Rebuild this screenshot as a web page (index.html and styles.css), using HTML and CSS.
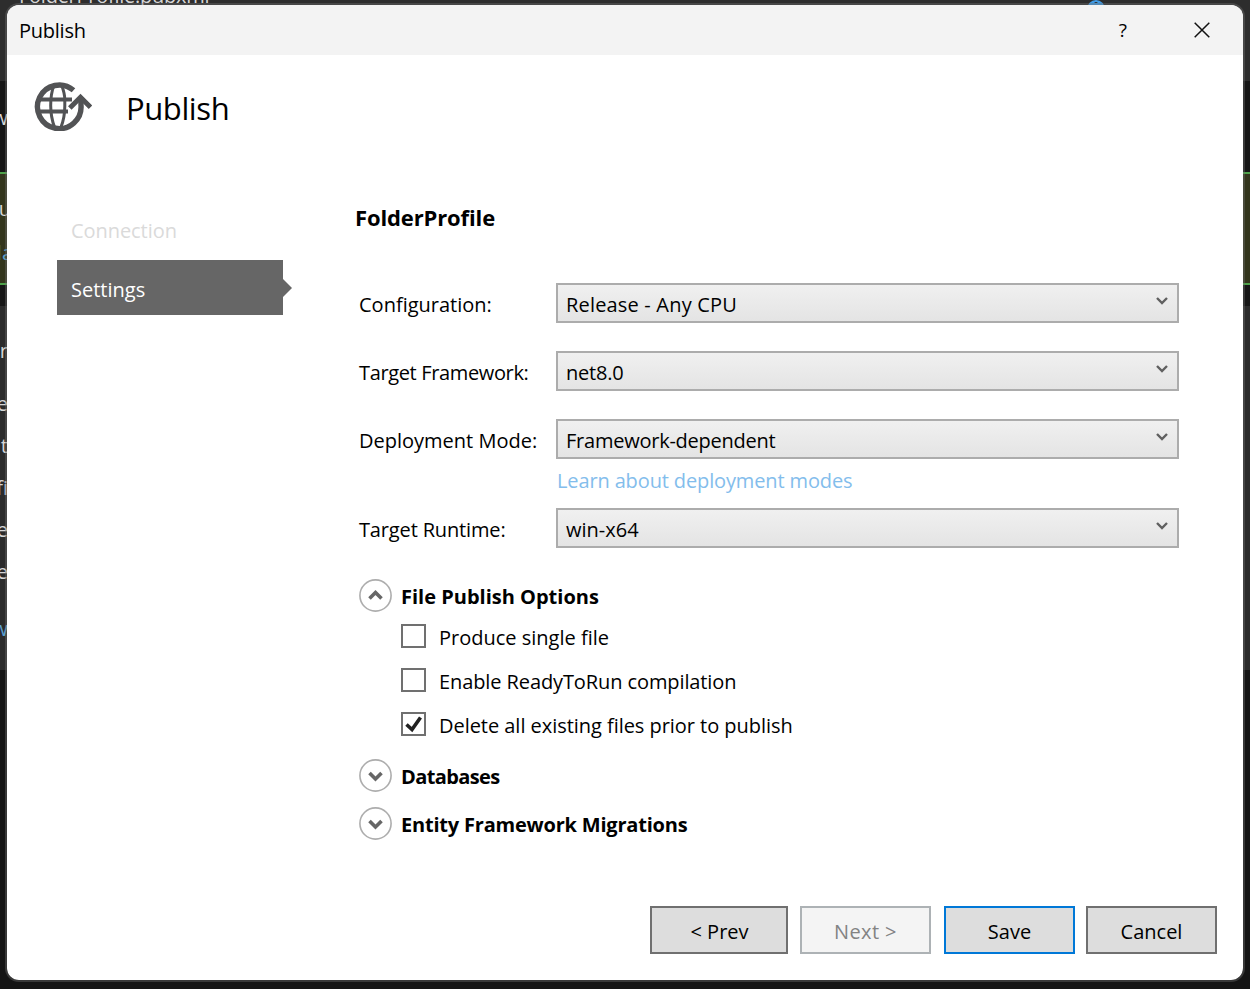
FILE: index.html
```html
<!DOCTYPE html>
<html lang="en">
<head>
    <meta charset="UTF-8" />
    <title>Publish</title>
    <link rel="stylesheet" href="styles.css">
</head>
<body>
    <div class="editor">
        <div class="band band-tabs"></div>
        <div class="band band-dark"></div>
        <div class="band band-notice"></div>
        <div class="band band-gap"></div>
        <div class="band band-panel"></div>
        <span class="peek peek-title">FolderProfile.pubxml</span>
        <svg class="peek-globe" width="18" height="18" viewBox="0 0 18 18" fill="none" stroke="#3f9be6" stroke-width="2"><circle cx="9" cy="9" r="8"/><path d="M2 4h14M6.500 1v16M11.500 1v16"/></svg>
        <span class="peek peek-1">w</span>
        <span class="peek peek-2">u</span>
        <span class="peek peek-3 blue">la</span>
        <span class="peek peek-4">r</span>
        <span class="peek peek-5">e</span>
        <span class="peek peek-6">t</span>
        <span class="peek peek-7">fi</span>
        <span class="peek peek-8">e</span>
        <span class="peek peek-9">e</span>
        <span class="peek peek-10 blue">w</span>
    </div>

    <div class="dialog">
        <div class="titlebar">
            <span class="titlebar-text">Publish</span>
            <span class="titlebar-help">?</span>
            <svg class="titlebar-close" width="16" height="16" viewBox="0 0 16 16" fill="none" stroke="#111" stroke-width="1.5"><path d="M.7.7l14.6 14.6M15.3.7L.7 15.3"/></svg>
        </div>

        <header class="header">
            <svg class="header-icon" width="58" height="50" viewBox="0 0 58 50" fill="none" stroke="#525355">
                <path d="M39.500 9.300A21.800 21.800 0 1 0 47 24V16" stroke-width="5.400"/>
                <path d="M3 18.500h35M3 30.500h31" stroke-width="4"/>
                <path d="M20 4c-4.500 12-4.500 29 .5 42M27.500 4c2 5 3.300 10 3.300 15v6c0 8-1 14-3.800 21" stroke-width="3"/>
                <path d="M35.800 27L46.500 16.300 56.500 26.300" stroke-width="5"/>
            </svg>
            <h1>Publish</h1>
        </header>

        <div class="content">
            <nav class="steps">
                <div class="step disabled">Connection</div>
                <div class="step active">Settings</div>
            </nav>

            <main class="settings">
                <h2>FolderProfile</h2>

                <div class="field">
                    <label>Configuration:</label>
                    <div class="select"><span class="value-config">Release - Any CPU</span><svg class="chevron" width="12" height="10" viewBox="0 0 12 10"><path d="M1 2l5 5 5-5"/></svg></div>
                </div>
                <div class="field">
                    <label class="label-framework">Target Framework:</label>
                    <div class="select"><span class="value-framework">net8.0</span><svg class="chevron" width="12" height="10" viewBox="0 0 12 10"><path d="M1 2l5 5 5-5"/></svg></div>
                </div>
                <div class="field field-mode">
                    <label>Deployment Mode:</label>
                    <div class="select"><span class="value-mode">Framework-dependent</span><svg class="chevron" width="12" height="10" viewBox="0 0 12 10"><path d="M1 2l5 5 5-5"/></svg></div>
                </div>
                <a class="learn-link">Learn about deployment modes</a>
                <div class="field field-runtime">
                    <label class="label-runtime">Target Runtime:</label>
                    <div class="select"><span>win-x64</span><svg class="chevron" width="12" height="10" viewBox="0 0 12 10"><path d="M1 2l5 5 5-5"/></svg></div>
                </div>

                <div class="expander">
                    <svg class="expander-icon" width="33" height="33" viewBox="0 0 33 33"><circle cx="16.500" cy="16.500" r="15.600"/><path d="M10.500 19.500l6-6 6 6"/></svg>
                    <h3>File Publish Options</h3>
                </div>
                <div class="options">
                    <div class="option"><span class="checkbox"></span><span>Produce single file</span></div>
                    <div class="option"><span class="checkbox"></span><span class="option-r2r">Enable ReadyToRun compilation</span></div>
                    <div class="option"><span class="checkbox"><svg width="17" height="17" viewBox="0 0 17 17" fill="none" stroke="#212121" stroke-width="3.600"><path d="M1.500 8.500l5.500 5L15.500 1.500"/></svg></span><span class="option-delete">Delete all existing files prior to publish</span></div>
                </div>
                <div class="expander">
                    <svg class="expander-icon" width="33" height="33" viewBox="0 0 33 33"><circle cx="16.500" cy="16.500" r="15.600"/><path d="M10.500 14l6 6 6-6"/></svg>
                    <h3 class="databases">Databases</h3>
                </div>
                <div class="expander">
                    <svg class="expander-icon" width="33" height="33" viewBox="0 0 33 33"><circle cx="16.500" cy="16.500" r="15.600"/><path d="M10.500 14l6 6 6-6"/></svg>
                    <h3 class="migrations">Entity Framework Migrations</h3>
                </div>
            </main>
        </div>

        <footer class="buttons">
            <button class="btn btn-prev">&lt; Prev</button>
            <button class="btn btn-next" disabled>Next &gt;</button>
            <button class="btn btn-save">Save</button>
            <button class="btn btn-cancel">Cancel</button>
        </footer>
    </div>
</body>
</html>
```
FILE: styles.css
```css
:root {
  --text: #000;
  --border: #acacac;
  --accent: #0078d7;
  --font: "Open Sans", "Noto Sans", sans-serif;
}

* {
  box-sizing: border-box;
  margin: 0;
  padding: 0;
}

body {
  position: relative;
  width: 1250px;
  height: 989px;
  overflow: hidden;
  background: #141414;
  color: var(--text);
  font-family: var(--font);
  font-size: 20px;
  line-height: 28px;
  white-space: nowrap;
}

/* editor window behind the dialog */
.band-tabs { height: 81px; background: #2d2d2d; }
.band-dark { height: 91px; background: #161616; }
.band-notice {
  height: 113px;
  background: #33351c;
  border-top: 2px solid #4ea24a;
  border-bottom: 2px solid #4ea24a;
}
.band-gap { height: 21px; background: #161616; }
.band-panel { height: 364px; background: #2b2b2b; }

.peek {
  position: absolute;
  right: 1242px;
  color: #d6d6d6;
}
.peek.blue { color: #5aa0d0; }
.peek-title { left: 19px; right: auto; top: -18px; letter-spacing: -0.25px; }
.peek-globe { position: absolute; left: 1087px; top: 0; }
.peek-1 { top: 104px; }
.peek-2 { top: 195px; right: 1239px; }
.peek-3 { top: 239px; right: 1237px; }
.peek-4 { top: 337px; }
.peek-5 { top: 390px; }
.peek-6 { top: 432px; }
.peek-7 { top: 474px; }
.peek-8 { top: 516px; }
.peek-9 { top: 558px; }
.peek-10 { top: 615px; }

.dialog {
  position: absolute;
  left: 5px;
  top: 3px;
  width: 1240px;
  height: 979px;
  display: flex;
  flex-direction: column;
  background: #fff;
  background-clip: padding-box;
  border: 2px solid rgba(110, 110, 110, 0.4);
  border-radius: 14px;
  overflow: hidden;
}

.titlebar {
  height: 50px;
  flex: none;
  display: flex;
  align-items: center;
  padding: 0 33px 0 12px;
  background: #f3f3f3;
}
.titlebar-text {
  padding-top: 2px;
  letter-spacing: -0.25px;
}
.titlebar-help {
  margin-left: auto;
  margin-right: 67px;
  font-size: 19px;
}

.header {
  height: 105px;
  flex: none;
  display: flex;
  align-items: center;
  padding-left: 27px;
}
.header-icon { margin: -4px 34px 0 0; }

h1 {
  font-size: 31px;
  font-weight: 400;
  line-height: 40px;
  letter-spacing: -0.4px;
}

.content {
  display: flex;
  margin-top: 43px;
  padding: 0 64px 0 50px;
}

.steps {
  width: 226px;
  margin-right: 73px;
}
.step {
  position: relative;
  height: 55px;
  padding: 14px;
}
.step.disabled { color: #dadada; letter-spacing: -0.06px; }
.step.active {
  margin-top: 2px;
  padding-top: 16px;
  background: #666;
  color: #fff;
}
.step.active::after {
  content: "";
  position: absolute;
  left: 100%;
  top: 19px;
  border: 9px solid transparent;
  border-left-color: #666;
  border-right: 0;
}

.settings {
  flex: 1;
  padding-left: 3px;
}

h2 {
  margin-left: -4px;
  font-size: 22px;
  font-weight: 700;
  letter-spacing: -0.13px;
}

.field {
  display: flex;
  align-items: center;
  height: 40px;
  margin-bottom: 28px;
}
h2 + .field { margin-top: 52px; }
.field label { width: 197px; padding-top: 3px; }
.label-framework { letter-spacing: -0.36px; }
.label-runtime { letter-spacing: -0.15px; }
.field-mode { margin-bottom: 8px; }
.field-runtime { margin-bottom: 31px; }

.select {
  flex: 1;
  height: 40px;
  display: flex;
  justify-content: space-between;
  padding: 6px 9px 0 8px;
  border: 2px solid var(--border);
  background: linear-gradient(#f0f0f0, #e4e4e4);
}
.value-config { letter-spacing: 0.18px; }
.value-framework { letter-spacing: -0.2px; }
.value-mode { letter-spacing: -0.24px; }
.chevron {
  margin-top: 5px;
  fill: none;
  stroke: #606060;
  stroke-width: 2.4;
}

.learn-link {
  display: block;
  height: 28px;
  margin: 0 0 13px 198px;
  color: #83bdec;
  letter-spacing: -0.13px;
}

.expander {
  display: flex;
  align-items: center;
  height: 33px;
  margin-bottom: 15px;
}
.expander-icon {
  margin-right: 9px;
  fill: none;
  stroke: #adadad;
  stroke-width: 1.6;
}
.expander-icon path {
  stroke: #666;
  stroke-width: 3.6;
}

h3 {
  font-size: 20px;
  font-weight: 700;
  padding-top: 2px;
}
.databases { letter-spacing: -0.6px; }
.migrations { letter-spacing: -0.2px; }

.options {
  margin: -3px 0 23px 42px;
}
.option {
  display: flex;
  height: 24px;
  margin-bottom: 20px;
}
.option-r2r { letter-spacing: -0.1px; }
.option-delete { letter-spacing: -0.04px; }
.checkbox {
  width: 25px;
  height: 24px;
  margin-right: 13px;
  padding: 2px;
  border: 2px solid #707070;
  line-height: 0;
}

.buttons {
  margin-top: auto;
  padding: 0 26px 26px 0;
  display: flex;
  justify-content: flex-end;
}
.btn {
  width: 131px;
  height: 48px;
  padding-top: 3px;
  border: 2px solid #707070;
  background: #ddd;
  color: var(--text);
  font: inherit;
}
.btn-prev { width: 138px; margin-right: 12px; padding-left: 1px; }
.btn-next {
  margin-right: 13px;
  border-color: #adb2b5;
  background: #f4f4f4;
  color: #838383;
  letter-spacing: 0.4px;
}
.btn-save { margin-right: 11px; border-color: var(--accent); }
```
